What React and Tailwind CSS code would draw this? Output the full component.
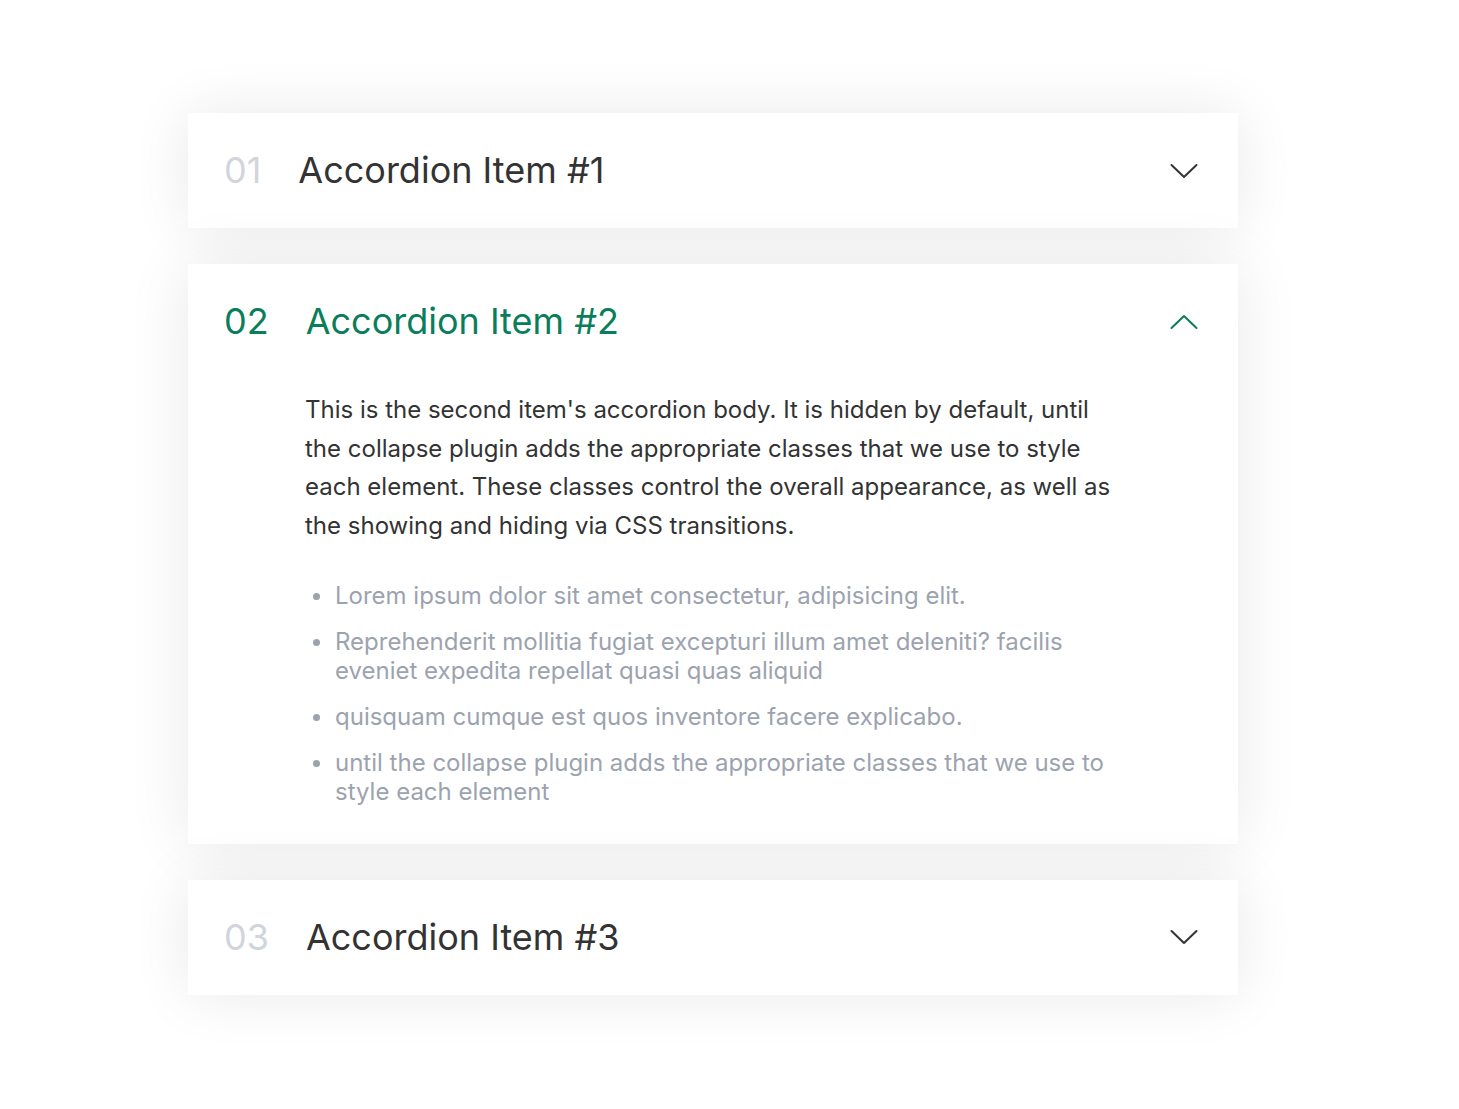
import React, { useState } from 'react';

const items = [
  { num: '01', title: 'Accordion Item #1' },
  { num: '02', title: 'Accordion Item #2' },
  { num: '03', title: 'Accordion Item #3' },
];

const bullets = [
  'Lorem ipsum dolor sit amet consectetur, adipisicing elit.',
  'Reprehenderit mollitia fugiat excepturi illum amet deleniti? facilis eveniet expedita repellat quasi quas aliquid',
  'quisquam cumque est quos inventore facere explicabo.',
  'until the collapse plugin adds the appropriate classes that we use to style each element',
];

const Chevron = ({ up }) => (
  <svg width="28" height="16" viewBox="0 0 28 16" fill="none" stroke="currentColor" strokeWidth="2" strokeLinecap="round" strokeLinejoin="round">
    {up ? <polyline points="1.5,14 14,2 26.5,14" /> : <polyline points="1.5,2 14,14 26.5,2" />}
  </svg>
);

const App = () => {
  const [open, setOpen] = useState(1);

  return (
    <div className="min-h-screen bg-white pt-[113px] pl-[188px] font-['Inter',sans-serif]">
      <div className="w-[1050px] flex flex-col gap-9">
        {items.map((item, i) => {
          const active = open === i;
          return (
            <div key={item.num} className="bg-white shadow-[0_0_60px_rgba(0,0,0,0.09)]">
              <button
                onClick={() => setOpen(active ? -1 : i)}
                className="w-full flex items-center pl-9 pr-[40px] py-9 text-left"
              >
                <span className={`text-[36px] leading-[43px] mr-[37px] ${active ? 'text-[#0a7d5b]' : 'text-[#d1d5db]'}`}>
                  {item.num}
                </span>
                <span className={`flex-1 text-[36px] leading-[43px] ${active ? 'text-[#0a7d5b]' : 'text-[#333333]'}`}>
                  {item.title}
                </span>
                <span className={active ? 'text-[#0a7d5b]' : 'text-[#333333]'}>
                  <Chevron up={active} />
                </span>
              </button>
              {active && (
                <div className="pl-[117px] pr-[120px] pt-[12px] pb-[38px]">
                  <p className="text-[24px] leading-[38.7px] text-[#333333] max-w-[812px]">
                    This is the second item's accordion body. It is hidden by default, until the collapse plugin adds the appropriate classes that we use to style each element. These classes control the overall appearance, as well as the showing and hiding via CSS transitions.
                  </p>
                  <ul className="mt-[35px] flex flex-col gap-[17px] max-w-[812px]">
                    {bullets.map((b) => (
                      <li key={b} className="flex text-[24px] leading-[29px] text-[#9ca3af]">
                        <span className="w-[30px] shrink-0 flex justify-start pl-[8px] pt-[12px]">
                          <span className="block w-[7px] h-[7px] rounded-full bg-[#9ca3af]" />
                        </span>
                        <span>{b}</span>
                      </li>
                    ))}
                  </ul>
                </div>
              )}
            </div>
          );
        })}
      </div>
    </div>
  );
};

export default App;
